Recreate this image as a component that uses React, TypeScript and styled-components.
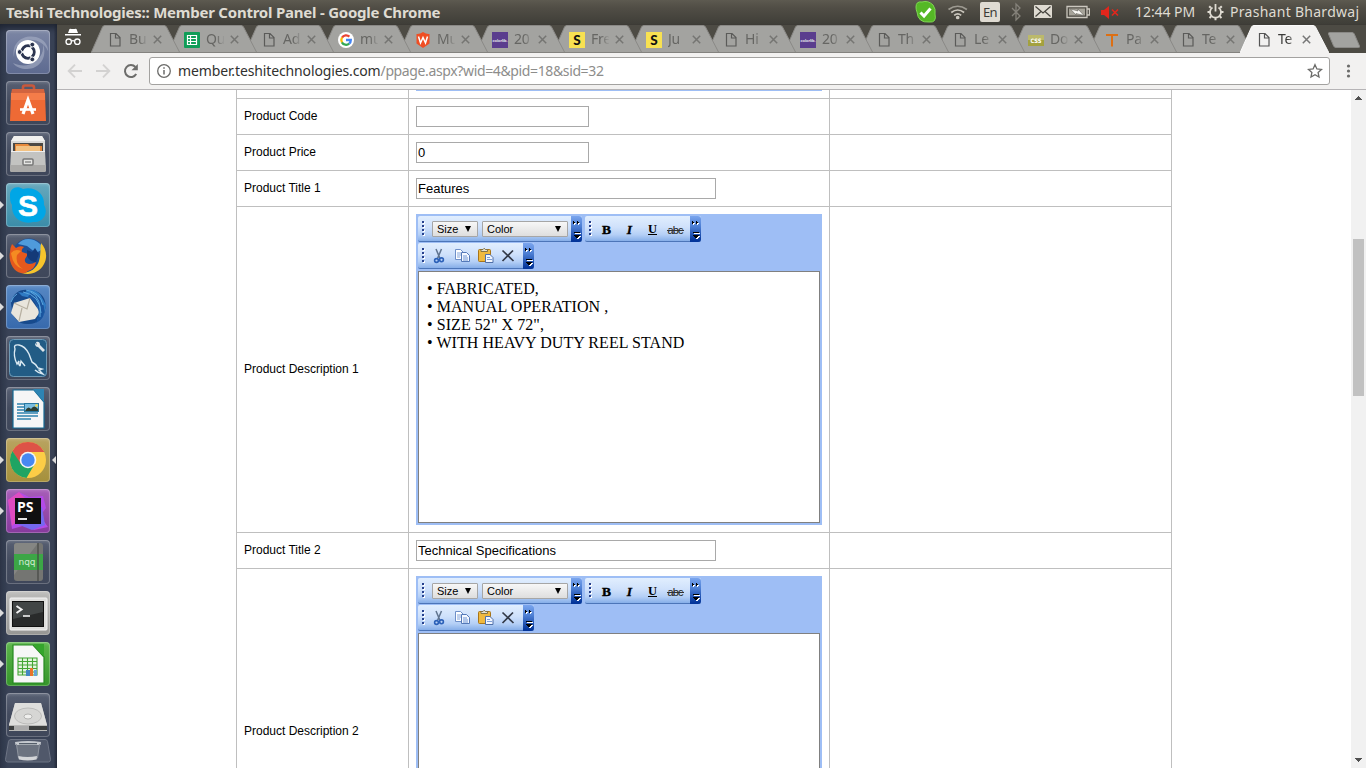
import React from 'react';
import styled, { createGlobalStyle, css } from 'styled-components';

const GlobalStyle = createGlobalStyle`
  * { box-sizing: border-box; }
  html, body { margin: 0; padding: 0; overflow: hidden; background: #fff; }
`;

const uiFont = css`font-family: "Noto Sans", "Open Sans", sans-serif;`;

/* ---------- Desktop shell ---------- */

const Desktop = styled.div`
  width: 1366px;
  height: 768px;
  display: flex;
  flex-direction: column;
  overflow: hidden;
`;

const TopPanel = styled.header`
  ${uiFont}
  flex: none;
  height: 24px;
  display: flex;
  align-items: center;
  padding: 0 6px;
  background: linear-gradient(#5d5a50 0, #514e46 30%, #3f3e38 100%);
  color: #dfdbd2;
`;

const WindowTitle = styled.div`
  font-size: 15px;
  font-weight: 700;
  line-height: 24px;
  letter-spacing: -0.23px;
  white-space: nowrap;
`;

const Tray = styled.div`
  margin-left: auto;
  display: flex;
  align-items: center;
  height: 24px;
`;

const TrayItem = styled.div<{ $w: number; $gap: number }>`
  flex: none;
  width: ${p => p.$w}px;
  height: 24px;
  margin-left: ${p => p.$gap}px;
  svg { display: block; }
`;

const TrayText = styled(TrayItem)<{ $track: number }>`
  font-size: 14px;
  line-height: 24px;
  letter-spacing: ${p => p.$track}px;
  white-space: nowrap;
`;

const LangBadge = styled.div`
  margin-top: 2px;
  height: 20px;
  border-radius: 2px;
  background: #dfdbd2;
  color: #3c3b37;
  font-size: 13px;
  line-height: 20px;
  letter-spacing: -0.6px;
  text-align: center;
`;

const Workspace = styled.div`
  flex: 1;
  display: flex;
  min-height: 0;
`;

/* ---------- Launcher ---------- */

const Launcher = styled.nav`
  flex: none;
  width: 57px;
  padding: 6px 7px 0 6px;
  display: flex;
  flex-direction: column;
  gap: 7px;
  background: linear-gradient(90deg, #2f384b 0, #394256 15%, #394256 94%, #242b3a 100%);
  box-shadow: inset 0 7px 7px -3px #1e2431;
`;

const Tile = styled.div<{ $bg: string }>`
  position: relative;
  flex: none;
  width: 44px;
  height: 44px;
  border-radius: 4px;
  background: ${p => p.$bg};
  box-shadow: inset 0 0 0 1px rgba(255, 255, 255, 0.22), inset 0 2px 3px rgba(255, 255, 255, 0.15);
  svg { display: block; }
`;

const Pip = styled.i<{ $right?: boolean }>`
  position: absolute;
  top: 18px;
  ${p => (p.$right ? 'right: -6px;' : 'left: -6px;')}
  border: 4px solid transparent;
  ${p => (p.$right ? 'border-right-color: #dcdcdc; border-left: 0;' : 'border-left-color: #dcdcdc; border-right: 0;')}
`;

const FoldedTile = styled.div`
  flex: none;
  width: 46px;
  height: 24px;
  margin: -5px 0 0 -1px;
`;

const dark = 'linear-gradient(#586073, #434b5e 50%, #3f475a)';

const Svg44 = ({ children }: { children: React.ReactNode }) => (
  <svg width="44" height="44" viewBox="0 0 44 44">{children}</svg>
);

const launcherItems: { bg: string; run?: boolean; focus?: boolean; art: React.ReactNode }[] = [
  {
    bg: 'linear-gradient(#7c86a4, #5d6a90)',
    art: (
      <Svg44>
        <path d="M8 27C5 12 18 4 30 7c8 2 12 8 12 14-4-8-11-12-20-11C13 11 8 18 8 27z" fill="#a9b1c6" opacity=".6" />
        <path d="M37 14c5 14-4 25-16 25-6 0-11-2-14-6 8 4 17 3 23-2 5-4 8-10 7-17z" fill="#a9b1c6" opacity=".6" />
        <circle cx="22" cy="22" r="12" fill="#fff" />
        <circle cx="22" cy="22" r="6.2" fill="none" stroke="#2c3550" strokeWidth="3" />
        <path d="M22 22L12 22M22 22l6.4 10M22 22l6.4-10" stroke="#fff" strokeWidth="1.3" />
        <circle cx="22" cy="22" r="4.7" fill="#fff" />
        <g fill="#2c3550" stroke="#fff" strokeWidth=".9"><circle cx="13.6" cy="22" r="2.4" /><circle cx="26.3" cy="14.6" r="2.4" /><circle cx="26.3" cy="29.4" r="2.4" /></g>
      </Svg44>
    ),
  },
  {
    bg: dark,
    art: (
      <Svg44>
        <path d="M17 12V6.500q0-2 2-2h7q2 0 2 2V12" fill="none" stroke="#c9583b" strokeWidth="2.600" />
        <path d="M6 8h32l1 5H5z" fill="#d2643f" />
        <path d="M5 12h34l1 28H4z" fill="#ee6a35" />
        <path d="M5 12h34v7H5z" fill="#f47c49" />
        <path d="M17 33l5-14 5 14" fill="none" stroke="#fff" strokeWidth="3.200" />
        <path d="M14 28.500h16" stroke="#fff" strokeWidth="2.600" />
      </Svg44>
    ),
  },
  {
    bg: dark,
    art: (
      <Svg44>
        <path d="M8 4h28l3 5v30H5V9z" fill="#d9d9d7" />
        <path d="M8 4h28l3 5H5z" fill="#f1f1ef" />
        <path d="M7 11h30v9H7z" fill="#4c4944" />
        <path d="M9 12h13l2 2h12v6H9z" fill="#e78a3c" />
        <path d="M10 14h24v5H10z" fill="#f3c282" />
        <path d="M5 19h34l1 19q0 2-2 2H6q-2 0-2-2z" fill="#c3c3c1" />
        <path d="M5 19h34v1H5z" fill="#eee" />
        <path d="M4.300 33h35.400l.3 5q0 2-2 2H6q-2 0-2-2z" fill="#aaa9a7" />
        <rect x="17" y="27" width="10" height="6" rx="1" fill="#e5e5e3" stroke="#777" strokeWidth="1.500" />
        <path d="M19 30h6" stroke="#777" strokeWidth="1.200" />
      </Svg44>
    ),
  },
  {
    bg: 'linear-gradient(#67a9bd, #3b8ca8)',
    run: true,
    art: (
      <Svg44>
        <path d="M4 12C4 5 11 2 17 6c12-3 22 5 21 16 5 8-1 18-11 17C15 42 5 34 6 22c-2-3-2-6-2-10z" fill="#00a6e6" />
        <text x="22" y="32.500" textAnchor="middle" fontFamily="Liberation Sans, sans-serif" fontWeight="700" fontSize="30" stroke="#fff" strokeWidth=".6" fill="#fff">S</text>
      </Svg44>
    ),
  },
  {
    bg: dark,
    run: true,
    art: (
      <Svg44>
        <circle cx="23" cy="21" r="16.500" fill="#1d4f96" />
        <path d="M12 10Q18 3 28 6q7 3 9 9l-7 4-9-7z" fill="#4f9bdb" />
        <path d="M35 9c5 5 7 14 3 21-4 8-14 12-22 9 8 0 15-5 17-12 2-6 1-12 2-18z" fill="#f6c42c" />
        <path d="M6 10l4 4q4-3 8-1-3 2-2 5l6 2-3 5q-1 4 4 5 4 0 7-2-1 7-8 9-3 3-7 2C7 38 2 27 4 18q0-4 2-8z" fill="#e5591d" />
        <path d="M5 19q4-5 10-2l-4 4q-2 9 6 14-10-2-12-16z" fill="#f58b22" />
        <path d="M21 16l5 2 3-4 4 6-3 8q-6 0-9-6z" fill="#143a78" />
      </Svg44>
    ),
  },
  {
    bg: 'linear-gradient(#5788c4, #3769ac)',
    run: true,
    art: (
      <Svg44>
        <path d="M5 18C7 8 14 4 22 5c12-1 20 9 17 20-1 9-9 15-18 14C12 39 8 33 6 26z" fill="#174a8c" />
        <path d="M12 7l6 1Q25 1 34 9l6 11-3 12-6 5q4-16-6-24l-9-2z" fill="#2f7bc4" />
        <path d="M8 18l16-5 10 14-5 7-16 3-8-9z" fill="#e9e5dc" />
        <path d="M8 18l13 6 3-11M16 23l-3 13" fill="none" stroke="#b7b0a1" strokeWidth="1.200" />
        <path d="M24 8q12 3 14 14t-8 16q4-8 2-15T22 12z" fill="#1a559f" />
        <path d="M20 5q14 2 17 15M17 7q17 3 18 21M25 7q11 6 9 25M5 17q2-6 6-8" stroke="#5ca7de" strokeWidth="1" fill="none" />
      </Svg44>
    ),
  },
  {
    bg: dark,
    art: (
      <Svg44>
        <rect x="3" y="3" width="38" height="38" rx="4" fill="#225c85" />
        <rect x="3.500" y="3.500" width="37" height="37" rx="4" fill="none" stroke="#6f9ab5" />
        <path d="M14 30q-2-2-1-5l-2 3Q7 20 9 13q-2-5 4-4 6 1 10 9l3 8q4 2 6 6l4 1-3 1 4 4q-5-1-8-4M14 30l1-5 4 5" fill="none" stroke="#d9e9f2" strokeWidth="1.400" />
        <path d="M30 6q4-1 4 3l5 5-2 2-5-5q-3 0-3-4l2 2z" fill="#dfe6ea" />
      </Svg44>
    ),
  },
  {
    bg: dark,
    art: (
      <Svg44>
        <path d="M7 3h21l10 12v26H7z" fill="#f6f6f6" stroke="#156a94" strokeWidth="1.200" />
        <path d="M27 2h11v13z" fill="#2d84b3" />
        <path d="M11 17h7M11 20h7M11 23h7M11 26h21M11 29h21M11 32h14" stroke="#2f83ae" strokeWidth="1.300" />
        <rect x="18.500" y="16.500" width="14" height="8" fill="#79bde0" stroke="#2878a0" />
        <path d="M19 24q3-6 6-2 3-5 7 0v2z" fill="#2c3d30" />
        <circle cx="30.500" cy="18.500" r="1.300" fill="#f6db43" />
      </Svg44>
    ),
  },
  {
    bg: 'linear-gradient(#b9a461, #a5903b)',
    run: true,
    focus: true,
    art: (
      <Svg44>
        <circle cx="22" cy="22" r="18" fill="#fccd46" />
        <path d="M22 14h16.500L37.600 13A18 18 0 0 0 6.400 13l9 15.500z" fill="#dd5347" />
        <path d="M6.400 13A18 18 0 0 0 20.500 40l8.500-14.500-7 4-7-3.500z" fill="#1fa463" />
        <circle cx="22" cy="22" r="8.300" fill="#f4f4f4" />
        <circle cx="22" cy="22" r="6.700" fill="#4688f1" />
      </Svg44>
    ),
  },
  {
    bg: 'linear-gradient(#a75eb8, #873a9d)',
    run: true,
    art: (
      <Svg44>
        <path d="M2 11l11-8 10 5 14-1 3 12-6 8 8 11-14 3-8-5-14 4z" fill="#b34be8" />
        <path d="M2 11l11-8 8 8-9 20-6 6z" fill="#de4cc0" />
        <path d="M27 22l9-4 3 18-13 5-15-6z" fill="#7568f0" />
        <rect x="9" y="9" width="26" height="26" fill="#101010" />
        <text x="11" y="22.500" fontFamily="Open Sans, sans-serif" fontWeight="700" fontSize="14" fill="#fff">PS</text>
        <path d="M12 30h9" stroke="#fff" strokeWidth="1.800" />
      </Svg44>
    ),
  },
  {
    bg: dark,
    art: (
      <Svg44>
        <rect x="8" y="3" width="29" height="38" rx="3" fill="#747572" />
        <path d="M8 35L32 3H11q-3 0-3 3z" fill="#858683" />
        <rect x="8" y="14" width="29" height="16" fill="#3ca646" />
        <path d="M32 3v38" stroke="#454744" strokeWidth="1.200" />
        <text x="21" y="25" textAnchor="middle" fontFamily="DejaVu Sans, sans-serif" fontSize="9" fill="#d2ecd2">nqq</text>
      </Svg44>
    ),
  },
  {
    bg: 'linear-gradient(#bcbcba, #969694)',
    run: true,
    art: (
      <Svg44>
        <rect x="4" y="7" width="37" height="32" rx="1" fill="#dededc" stroke="#f3f3f3" />
        <rect x="6.500" y="10.500" width="31" height="25" fill="#292b2b" stroke="#111" />
        <path d="M7 11h30v10L7 28z" fill="#424646" />
        <path d="M10.500 15l5 3.500-5 3.500" fill="none" stroke="#f2f2f2" strokeWidth="2" />
        <path d="M17 25h7" stroke="#f2f2f2" strokeWidth="1.600" />
      </Svg44>
    ),
  },
  {
    bg: 'linear-gradient(#5cb64b, #35952a)',
    run: true,
    art: (
      <Svg44>
        <path d="M7 3h20l11 12v26H7z" fill="#f7f7f7" stroke="#258920" strokeWidth="1.200" />
        <path d="M27 2h11v13z" fill="#34a52c" />
        <path d="M12 16h19v17H12zM12 19.500h19M12 23h19M12 26.500h19M12 30h19M16.500 16v17M21.500 16v17M26.500 16v17" fill="#e4f3df" stroke="#43a634" strokeWidth="1.100" />
        <path d="M20 34v-6h4v6z" fill="#4386c1" /><path d="M24 34v-8h3v8z" fill="#e8732c" /><path d="M28 34v-6h3v6z" fill="#67a4d8" />
      </Svg44>
    ),
  },
  {
    bg: dark,
    art: (
      <Svg44>
        <path d="M9 10h26l6 22v6H3v-6z" fill="#b9b9b7" />
        <path d="M9 10h26l6 22H3z" fill="#dededc" />
        <ellipse cx="22" cy="23" rx="13.500" ry="8" fill="#d6d6d4" stroke="#bcbcba" />
        <ellipse cx="22" cy="23.500" rx="4" ry="2.500" fill="#efefed" stroke="#b4b4b2" />
        <path d="M3 33h38v4H3z" fill="#3b3d3d" />
        <path d="M8 33h15v4H8z" fill="#aaa" />
      </Svg44>
    ),
  },
];

const LauncherBar = () => (
  <Launcher>
    {launcherItems.map((it, i) => (
      <Tile key={i} $bg={it.bg}>
        {it.art}
        {it.run && <Pip />}
        {it.focus && <Pip $right />}
      </Tile>
    ))}
    <FoldedTile>
      <svg width="46" height="24" viewBox="0 0 46 24">
        <path d="M6 .5h34q2 0 2.500 2l3 18q0 2.500-2 2.500H2.500q-2 0-2-2.500l3-18q.5-2 2.500-2z" fill="#50586a" stroke="#6d7484" />
        <path d="M10.500 4h25L32 20H14z" fill="#6c7380" />
        <path d="M10 3q13-2 26 0l-.5 3h-25z" fill="#c5c9cf" />
        <path d="M14 4h18v1.300H14z" fill="#555e6a" />
        <path d="M11.500 5l2 14h19l2-14" fill="none" stroke="#8d939e" />
        <path d="M13.300 17q9.200 2 18.700 0l-.4 3.500q-9 2-17.700 0z" fill="#d3d5d8" />
      </svg>
    </FoldedTile>
  </Launcher>
);

/* ---------- Browser chrome ---------- */

const Browser = styled.main`
  flex: 1;
  min-width: 0;
  display: flex;
  flex-direction: column;
`;

const TabStrip = styled.div`
  ${uiFont}
  flex: none;
  height: 29px;
  display: flex;
  align-items: flex-start;
  padding-top: 1px;
  background: #4d4b44;
  box-shadow: inset 0 1px #3d3b36;
`;

const Incognito = styled.div`
  flex: none;
  width: 34px;
  height: 28px;
`;

const TabBox = styled.div<{ $z: number; $overlap: number }>`
  position: relative;
  z-index: ${p => p.$z};
  flex: none;
  width: 89px;
  height: 28px;
  margin-right: ${p => -p.$overlap}px;
  display: flex;
  align-items: center;
  padding-left: 16px;
`;

const TabShape = styled.svg`
  position: absolute;
  inset: 0;
  z-index: -1;
`;

const Favicon = styled.div`
  flex: none;
  width: 16px;
  height: 16px;
  margin-top: 2px;
  svg { display: block; }
`;

const TabLabel = styled.div<{ $active: boolean }>`
  flex: none;
  width: 18px;
  margin-left: 6px;
  overflow: hidden;
  font-size: 14px;
  line-height: 28px;
  letter-spacing: -0.2px;
  white-space: nowrap;
  color: ${p => (p.$active ? '#3a3a38' : '#666663')};
  mask-image: linear-gradient(90deg, #000 55%, transparent 105%);
`;

const TabClose = styled.svg`
  flex: none;
  margin: 1px 0 0 6px;
`;

const NewTab = styled.svg`
  flex: none;
  margin: 7px 0 0 10px;
`;

const NavBar = styled.div`
  ${uiFont}
  flex: none;
  height: 37px;
  display: flex;
  align-items: center;
  background: #f2f1f0;
  border-bottom: 1px solid #b6b4b6;
  padding-left: 10px;
`;

const NavIcon = styled.div<{ $gap: number }>`
  flex: none;
  width: 16px;
  height: 16px;
  margin-right: ${p => p.$gap}px;
  svg { display: block; }
`;

const Omnibox = styled.div`
  flex: none;
  width: 1181px;
  height: 28px;
  display: flex;
  align-items: center;
  padding: 0 6px;
  background: #fff;
  border: 1px solid #a3a2a0;
  border-radius: 3px;
`;

const Url = styled.div`
  flex: 1;
  margin-left: 6px;
  font-size: 14px;
  line-height: 26px;
  letter-spacing: -0.37px;
  white-space: nowrap;
  color: #8d8d8b;
`;

const Host = styled.span`
  letter-spacing: -0.13px;
  color: #31312f;
`;

type Icon = 'page' | 'sheet' | 'google' | 'w3' | 'colorlib' | 'sn' | 'css' | 'tee';

const FavArt = ({ kind, active }: { kind: Icon; active?: boolean }) => (
  <svg width="16" height="16" viewBox="0 0 16 16">
    {kind === 'page' && (
      <path d="M3.500 1.500h5.500l4 4v8.500H3.500zM8.500 2v4h4.500" fill="none" stroke={active ? '#555' : '#5b5b59'} strokeWidth="1.200" />
    )}
    {kind === 'sheet' && (
      <>
        <rect width="16" height="16" rx="1" fill="#0f9d58" />
        <path d="M3.500 3.500h9v9h-9zM3.500 6.500h9M3.500 9.500h9M6.500 3.500v9" fill="none" stroke="#fff" strokeWidth="1.200" />
      </>
    )}
    {kind === 'google' && (
      <>
        <circle cx="8" cy="8" r="8" fill="#fff" />
        <g fill="none" strokeWidth="2.300">
          <path d="M4 5.700A4.800 4.800 0 0 1 11.400 4.600" stroke="#ea4335" />
          <path d="M4 5.500a5 5 0 0 0 0 5" stroke="#fbbc05" />
          <path d="M3.900 10.400a4.800 4.800 0 0 0 7.300 1.200" stroke="#34a853" />
          <path d="M8 8h4.800q0 2.300-1.600 3.700" stroke="#4285f4" />
        </g>
      </>
    )}
    {kind === 'w3' && (
      <>
        <path d="M1.500 2q3 .5 6.500-2 3.500 2.500 6.500 2v9.500L8 16l-6.500-4.500z" fill="#f04e23" />
        <path d="M3.500 4.500l2 6.500L8 5.500l2.500 5.500 2-6.500" fill="none" stroke="#fff" strokeWidth="1.500" />
      </>
    )}
    {kind === 'colorlib' && (
      <>
        <rect width="16" height="16" fill="#5a3d8e" />
        <text x="8" y="9.700" textAnchor="middle" fontFamily="Lato, sans-serif" fontWeight="700" fontSize="4.500" textLength="15" lengthAdjust="spacingAndGlyphs" fill="#eee">colorlib.</text>
      </>
    )}
    {kind === 'sn' && (
      <>
        <rect width="16" height="16" fill="#f8e151" />
        <text x="8" y="12.700" textAnchor="middle" fontFamily="Lato, sans-serif" fontWeight="900" fontSize="13.500" fill="#111">S</text>
      </>
    )}
    {kind === 'css' && (
      <>
        <rect y="3" width="16" height="11" fill="#a3a13f" />
        <path d="M0 3h16v5H0z" fill="#bbb96b" />
        <text x="8" y="10.500" textAnchor="middle" fontFamily="DejaVu Sans, sans-serif" fontWeight="700" fontSize="6" textLength="11" lengthAdjust="spacingAndGlyphs" fill="#fff">CSS</text>
      </>
    )}
    {kind === 'tee' && <path d="M2 3h12M8 3V14.500" stroke="#dd6f13" strokeWidth="2" fill="none" />}
  </svg>
);

const tabs: { icon: Icon; label: string }[] = [
  { icon: 'page', label: 'Bu' },
  { icon: 'sheet', label: 'Qu' },
  { icon: 'page', label: 'Ad' },
  { icon: 'google', label: 'mu' },
  { icon: 'w3', label: 'Mu' },
  { icon: 'colorlib', label: '20' },
  { icon: 'sn', label: 'Fre' },
  { icon: 'sn', label: 'Ju' },
  { icon: 'page', label: 'Hi' },
  { icon: 'colorlib', label: '20' },
  { icon: 'page', label: 'Th' },
  { icon: 'page', label: 'Le' },
  { icon: 'css', label: 'Do' },
  { icon: 'tee', label: 'Pa' },
  { icon: 'page', label: 'Te' },
  { icon: 'page', label: 'Te' },
];

const Tab = ({ icon, label, index }: { icon: Icon; label: string; index: number }) => {
  const active = index === tabs.length - 1;
  return (
    <TabBox $z={active ? 30 : 20 - index} $overlap={active ? 12 : index < 9 ? 12 : 13}>
      <TabShape width="89" height="28" viewBox="0 0 89 28">
        <path d="M0 28L11.500 2Q12.200.5 14 .5H73Q74.800.5 75.500 2L89 28z" fill={active ? '#f2f1f0' : '#a3a3a0'} />
        <path d="M0 28L11.500 2Q12.200.5 14 .5H73Q74.800.5 75.500 2L89 28" fill="none" stroke={active ? '#fafafa' : '#8a8986'} />
        {!active && <path d="M0 27.500h89" stroke="#83827f" />}
      </TabShape>
      <Favicon><FavArt kind={icon} active={active} /></Favicon>
      <TabLabel $active={active}>{label}</TabLabel>
      <TabClose width="9" height="9" viewBox="0 0 9 9">
        <path d="M.8.8l7.400 7.400M8.200.8L.8 8.200" stroke={active ? '#777' : '#757572'} strokeWidth="1.500" />
      </TabClose>
    </TabBox>
  );
};

/* ---------- Page ---------- */

const Viewport = styled.div`
  flex: 1;
  display: flex;
  min-height: 0;
  background: #fff;
`;

const PageArea = styled.div`
  flex: 1;
  overflow: hidden;
  padding-left: 179px;
`;

const FormGrid = styled.div`
  width: 936px;
  border-left: 1px solid #bfbfbf;
  font-family: "Liberation Sans", Arial, sans-serif;
`;

const FormRow = styled.div<{ $h: number }>`
  display: grid;
  grid-template-columns: 172px 421px 342px;
  height: ${p => p.$h}px;
  border-bottom: 1px solid #bfbfbf;
`;

const Cell = styled.div<{ $top?: boolean; $label?: boolean }>`
  display: flex;
  align-items: ${p => (p.$top ? 'flex-start' : 'center')};
  padding: ${p => (p.$top ? 7 : 0)}px 7px ${p => (p.$label ? 2 : 0)}px;
  border-right: 1px solid #bfbfbf;
  font-size: 12px;
  line-height: 14px;
  color: #000;
  overflow: hidden;
`;

const Field = styled.input<{ $w: number }>`
  width: ${p => p.$w}px;
  height: 21px;
  padding: 1px;
  border: 1px solid #a9a9a9;
  border-radius: 0;
  background: #fff;
  color: #000;
  font: 13px "Liberation Sans", Arial, sans-serif;
  outline: none;
`;

const EditorTail = styled.div`
  width: 406px;
  height: 1px;
  background: #9ebef5;
`;

const Editor = styled.div`
  width: 406px;
  height: 311px;
  padding: 2px;
  background: #9ebef5;
`;

const ToolRow = styled.div`
  display: flex;
  gap: 3px;
  height: 27px;
`;

const Tools = styled.div<{ $w: number }>`
  position: relative;
  flex: none;
  width: ${p => p.$w}px;
  height: 26px;
  display: flex;
  align-items: center;
  padding-left: 4px;
  border-radius: 2px;
  background: linear-gradient(#e1eefe 0, #cfe1fb 45%, #b4cff6 75%, #86aee8 100%);
  border-bottom: 1px solid #4c75b8;
`;

const Grip = styled.svg<{ $gap: number }>`
  flex: none;
  margin-right: ${p => p.$gap}px;
`;

const Drop = styled.div<{ $w: number }>`
  flex: none;
  width: ${p => p.$w}px;
  height: 16px;
  margin-right: 4px;
  padding: 0 6px 0 4px;
  display: flex;
  align-items: center;
  justify-content: space-between;
  border: 1px solid #a6a6a6;
  border-radius: 1px;
  background: linear-gradient(#f7f7f7, #dedede);
  font-size: 11px;
  line-height: 14px;
`;

const Overflow = styled.div`
  position: absolute;
  top: 0;
  right: 0;
  width: 11px;
  height: 26px;
  border-radius: 0 3px 3px 0;
  background: linear-gradient(#7aa5ee 0, #4d7fd4 40%, #03359a 95%);
  svg { display: block; }
`;

const ToolButton = styled.div`
  flex: none;
  width: 23px;
  height: 22px;
  svg { display: block; }
`;

const EditArea = styled.div`
  height: 252px;
  margin-top: 1px;
  padding: 8px;
  background: #fff;
  border: 1px solid #808080;
  font: 16px/18px "Liberation Serif", "Times New Roman", serif;
  letter-spacing: 0.06px;
`;

const GripDots = ({ gap = 3 }: { gap?: number }) => (
  <Grip $gap={gap} width="4" height="15" viewBox="0 0 4 15">
    {[0, 4, 8, 12].map(y => (
      <g key={y}>
        <rect x="1" y={y + 1} width="2" height="2" fill="#fff" />
        <rect x="0" y={y} width="2" height="2" fill="#27418e" />
      </g>
    ))}
  </Grip>
);

const More = () => (
  <Overflow>
    <svg width="11" height="26" viewBox="0 0 11 26" shapeRendering="crispEdges">
      <path d="M3 6h1v1h1v1h-1v1h-1zM7 6h1v1h1v1h-1v1h-1z" fill="#fff" />
      <path d="M2 5h1v1h1v1h-1v1h-1zM6 5h1v1h1v1h-1v1h-1z" fill="#000" />
      <path d="M4 17h6v1H4zM4 20h6v1H9v1H8v1H6v-1H5v-1H4z" fill="#fff" />
      <path d="M3 16h6v1H3zM3 19h6v1H8v1H7v1H5v-1H4v-1H3z" fill="#000" />
    </svg>
  </Overflow>
);

const FormatButtons = () => (
  <>
    {['B', 'I', 'U', 'abc'].map(t => (
      <ToolButton key={t}>
        <svg width="23" height="22" viewBox="0 0 23 22" fontFamily="DejaVu Serif, serif" fontWeight="700" fontSize="12" textAnchor="middle">
          {t === 'B' && <text x="10.500" y="15.500" fontFamily="Liberation Serif, serif" fontSize="13.500" stroke="#000" strokeWidth=".4">B</text>}
          {t === 'I' && <text x="10.500" y="15.500" fontStyle="italic" fontFamily="Liberation Serif, serif" fontSize="13.500" stroke="#000" strokeWidth=".3">I</text>}
          {t === 'U' && <><text x="10.500" y="14.500" fontFamily="Liberation Serif, serif" fontSize="12.500">U</text><path d="M6 16.500h9" stroke="#000" /></>}
          {t === 'abc' && <><text x="10.500" y="15.500" fontFamily="Liberation Sans, sans-serif" fontWeight="400" fontSize="11" textLength="16" fill="#222">abc</text><path d="M2 12.500h17" stroke="#333" /></>}
        </svg>
      </ToolButton>
    ))}
  </>
);

const ClipButtons = () => (
  <>
    <ToolButton>
      <svg width="23" height="22" viewBox="0 0 23 22">
        <path d="M7 4l4 9.500M12.500 4l-4 9.500" stroke="#60748f" strokeWidth="1.500" fill="none" />
        <circle cx="7.500" cy="15.500" r="1.900" fill="none" stroke="#2c61b8" strokeWidth="1.600" />
        <circle cx="12.500" cy="14.800" r="1.900" fill="none" stroke="#2c61b8" strokeWidth="1.600" />
      </svg>
    </ToolButton>
    <ToolButton>
      <svg width="23" height="22" viewBox="0 0 23 22">
        <path d="M3.500 4.500h5l3 3v7h-8z" fill="#fff" stroke="#6e8fc8" />
        <path d="M5 8h4M5 10h4M5 12h3" stroke="#83a4db" />
        <path d="M9.500 7.500h5l3 3v6h-8z" fill="#f4f8ff" stroke="#5479b8" />
        <path d="M11 11h4M11 13h5M11 15h5" stroke="#6f95d4" />
      </svg>
    </ToolButton>
    <ToolButton>
      <svg width="23" height="22" viewBox="0 0 23 22">
        <rect x="3.500" y="4.500" width="12" height="12" rx="1" fill="#f0b93e" stroke="#a87518" />
        <path d="M6 6.500V4.500h2q1-2.500 2.500 0h2v2z" fill="#e6e2cf" stroke="#7b6a3c" strokeWidth=".9" />
        <path d="M10.500 9.500h4.500l3 3v5h-7.500z" fill="#f1f6ff" stroke="#4f6fa8" />
        <path d="M12 12.500h3M12 14.500h5" stroke="#7f9fd6" />
      </svg>
    </ToolButton>
    <ToolButton>
      <svg width="23" height="22" viewBox="0 0 23 22">
        <path d="M4.500 5.500l11 10.500M15 5.500L4.500 16" stroke="#333a48" strokeWidth="1.700" fill="none" />
      </svg>
    </ToolButton>
  </>
);

const Caret = () => (
  <svg width="6" height="6" viewBox="0 0 6 6"><path d="M0 0h6L3 6z" fill="#000" /></svg>
);

const RichEditor = ({ lines }: { lines: string[] }) => (
  <Editor>
    <ToolRow>
      <Tools $w={164}>
        <GripDots gap={6} />
        <Drop $w={46}><span>Size</span><Caret /></Drop>
        <Drop $w={86}><span>Color</span><Caret /></Drop>
        <More />
      </Tools>
      <Tools $w={116}>
        <GripDots />
        <FormatButtons />
        <More />
      </Tools>
    </ToolRow>
    <ToolRow>
      <Tools $w={116}>
        <GripDots />
        <ClipButtons />
        <More />
      </Tools>
    </ToolRow>
    <EditArea>
      {lines.map(l => <div key={l}>{l}</div>)}
    </EditArea>
  </Editor>
);

const ScrollTrack = styled.div`
  flex: none;
  width: 15px;
  display: flex;
  flex-direction: column;
  align-items: center;
  background: #f1f1f1;
`;

const ScrollArrow = styled.svg`
  flex: none;
`;

const ScrollThumb = styled.div`
  width: 11px;
  height: 157px;
  margin: 134px 0 auto;
  background: #c1c1c1;
`;

const Row = ({ h, label, top, children }: { h: number; label?: string; top?: boolean; children?: React.ReactNode }) => (
  <FormRow $h={h}>
    <Cell $label>{label}</Cell>
    <Cell $top={top}>{children}</Cell>
    <Cell />
  </FormRow>
);

const TailRow = styled(FormRow)`
  ${Cell} { padding-top: 0; align-items: flex-start; }
`;

const SystemTray = () => (
  <Tray>
    <TrayItem $w={22} $gap={0}>
      <svg width="22" height="24" viewBox="0 0 22 24">
        <path d="M2 7Q2 1 8 2q6-2 11 3 3 4 2 9 2 9-6 8-11 1-12-10-1-2-1-5z" fill="#55b826" stroke="#7fd653" />
        <path d="M6.500 12.500l3.500 3.500L16.500 8.500" stroke="#fff" strokeWidth="3" fill="none" />
      </svg>
    </TrayItem>
    <TrayItem $w={20} $gap={11}>
      <svg width="22" height="24" viewBox="0 0 22 24" fill="none" stroke="#cbc7be" strokeWidth="1.700">
        <path d="M1.500 9.500q9.200-6.500 18.400 0" stroke="#9d9a91" /><path d="M4.300 12.500q6.400-5 12.800 0" /><path d="M7.200 15.300q3.500-3 7 0" /><circle cx="10.700" cy="17.500" r="1" fill="#dfdbd2" />
      </svg>
    </TrayItem>
    <TrayItem $w={20} $gap={13}><LangBadge>En</LangBadge></TrayItem>
    <TrayItem $w={10} $gap={11}>
      <svg width="10" height="24" viewBox="0 0 10 24"><path d="M1 8l8 8-4 4V4l4 4-8 8" fill="none" stroke="#85827a" strokeWidth="1.300" /></svg>
    </TrayItem>
    <TrayItem $w={18} $gap={13}>
      <svg width="18" height="24" viewBox="0 0 18 24">
        <rect y="5" width="18" height="13" rx="1" fill="#dfdbd2" />
        <path d="M1.500 6.500L9 13l7.500-6.500M1.500 16.500l5.500-5M16.500 16.500l-5.500-5" fill="none" stroke="#45433d" strokeWidth="1.200" />
      </svg>
    </TrayItem>
    <TrayItem $w={24} $gap={14}>
      <svg width="24" height="24" viewBox="0 0 24 24">
        <path d="M1 6.500h20v11H1zM21.500 9h2v6h-2" fill="none" stroke="#cbc7be" strokeWidth="1.300" />
        <path d="M3 8.500h16v7H3z" fill="#a6a399" />
        <path d="M4.500 9l7.500 2V9l6 6.500-8-2V15z" fill="#f8f7f3" stroke="#55534c" strokeWidth=".5" />
      </svg>
    </TrayItem>
    <TrayItem $w={18} $gap={11}>
      <svg width="18" height="24" viewBox="0 0 18 24">
        <path d="M0 10h3l5-4v13l-5-4H0z" fill="#e1261c" /><path d="M11 9.500l6 6M17 9.500l-6 6" stroke="#e1261c" strokeWidth="1.700" />
      </svg>
    </TrayItem>
    <TrayText $w={61} $gap={16} $track={-0.05}>12:44 PM</TrayText>
    <TrayItem $w={17} $gap={11}>
      <svg width="17" height="24" viewBox="0 0 17 24" fill="none" stroke="#dfdbd2">
        <path d="M5.500 7.500a5.500 5.500 0 1 0 6 0" strokeWidth="1.800" />
        <path d="M8.500 4v7.500" strokeWidth="1.800" />
        <path d="M3.800 7.800L2.200 6.200M13.200 7.800L14.800 6.200M3 12H.5M14 12h2.500M4.300 16.300L2.500 18M12.700 16.300l1.800 1.700M8.500 18v2.300" strokeWidth="2" />
      </svg>
    </TrayItem>
    <TrayText $w={130} $gap={6} $track={0.28}>Prashant Bhardwaj</TrayText>
  </Tray>
);

export default function App() {
  return (
    <>
      <GlobalStyle />
      <Desktop>
        <TopPanel>
          <WindowTitle>Teshi Technologies:: Member Control Panel - Google Chrome</WindowTitle>
          <SystemTray />
        </TopPanel>
        <Workspace>
          <LauncherBar />
          <Browser>
            <TabStrip>
              <Incognito>
                <svg width="34" height="28" viewBox="0 0 34 28">
                  <path d="M11 8l1.500-4q1-.7 2 0h3q1-.7 2 0L21 8zM8 9h16v1.600H8z" fill="#fff" />
                  <g fill="none" stroke="#fff" strokeWidth="1.300"><circle cx="11.700" cy="16.700" r="2.700" /><circle cx="20.300" cy="16.700" r="2.700" /><path d="M14.400 16.200q1.600-1 3.200 0" /></g>
                </svg>
              </Incognito>
              {tabs.map((t, i) => <Tab key={i} index={i} icon={t.icon} label={t.label} />)}
              <NewTab width="34" height="17" viewBox="0 0 34 17">
                <path d="M2.500 .5H25q1.700 0 2.300 1.500L32.500 14q.5 1.500-1 1.500H9q-1.700 0-2.400-1.500L1.500 2Q1 .5 2.500 .5z" fill="#a3a3a0" stroke="#8a8986" />
              </NewTab>
            </TabStrip>
            <NavBar>
              <NavIcon $gap={12}>
                <svg width="16" height="16" viewBox="0 0 16 16"><path d="M15 8H2M8 1.700L1.700 8 8 14.300" fill="none" stroke="#d3d2d1" strokeWidth="1.900" /></svg>
              </NavIcon>
              <NavIcon $gap={12}>
                <svg width="16" height="16" viewBox="0 0 16 16"><path d="M1 8h13M8 1.700L14.300 8 8 14.300" fill="none" stroke="#d3d2d1" strokeWidth="1.900" /></svg>
              </NavIcon>
              <NavIcon $gap={10}>
                <svg width="16" height="16" viewBox="0 0 16 16"><path d="M13.200 11A6 6 0 1 1 12.400 4" fill="none" stroke="#6d6d6b" strokeWidth="2" /><path d="M14.800 1v6.300H8.500z" fill="#6d6d6b" /></svg>
              </NavIcon>
              <Omnibox>
                <svg width="16" height="16" viewBox="0 0 16 16"><circle cx="8" cy="8" r="6.300" fill="none" stroke="#6b6b69" strokeWidth="1.300" /><path d="M8 7v4.500M8 4.200v1.600" stroke="#6b6b69" strokeWidth="1.500" /></svg>
                <Url><Host>member.teshitechnologies.com</Host>/ppage.aspx?wid=4&amp;pid=18&amp;sid=32</Url>
                <svg width="16" height="16" viewBox="0 0 16 16"><path d="M8 1.700l1.900 4.200 4.600.5-3.400 3.100.9 4.500-4-2.300L4 14l.9-4.500L1.500 6.400l4.600-.5z" fill="none" stroke="#6b6b69" strokeWidth="1.300" /></svg>
              </Omnibox>
              <svg width="36" height="16" viewBox="0 0 36 16"><g fill="#6b6b69"><circle cx="18.500" cy="3" r="1.600" /><circle cx="18.500" cy="8" r="1.600" /><circle cx="18.500" cy="13" r="1.600" /></g></svg>
            </NavBar>
            <Viewport>
              <PageArea>
                <FormGrid>
                  <TailRow $h={9}><Cell /><Cell><EditorTail /></Cell><Cell /></TailRow>
                  <Row h={36} label="Product Code"><Field $w={173} defaultValue="" /></Row>
                  <Row h={36} label="Product Price"><Field $w={173} defaultValue="0" /></Row>
                  <Row h={36} label="Product Title 1"><Field $w={300} defaultValue="Features" /></Row>
                  <Row h={326} label="Product Description 1" top>
                    <RichEditor lines={['• FABRICATED,', '• MANUAL OPERATION ,', '• SIZE 52" X 72",', '• WITH HEAVY DUTY REEL STAND']} />
                  </Row>
                  <Row h={36} label="Product Title 2"><Field $w={300} defaultValue="Technical Specifications" /></Row>
                  <Row h={326} label="Product Description 2" top><RichEditor lines={[]} /></Row>
                </FormGrid>
              </PageArea>
              <ScrollTrack>
                <ScrollArrow width="15" height="15" viewBox="0 0 15 15" shapeRendering="crispEdges"><path d="M7 6h1v1h1v1h1v1h1v1H4V9h1V8h1V7h1z" fill="#505050" /></ScrollArrow>
                <ScrollThumb />
                <ScrollArrow width="15" height="15" viewBox="0 0 15 15" shapeRendering="crispEdges"><path d="M4 5h7v1h-1v1H9v1H8v1H7V8H6V7H5V6H4z" fill="#505050" /></ScrollArrow>
              </ScrollTrack>
            </Viewport>
          </Browser>
        </Workspace>
      </Desktop>
    </>
  );
}
